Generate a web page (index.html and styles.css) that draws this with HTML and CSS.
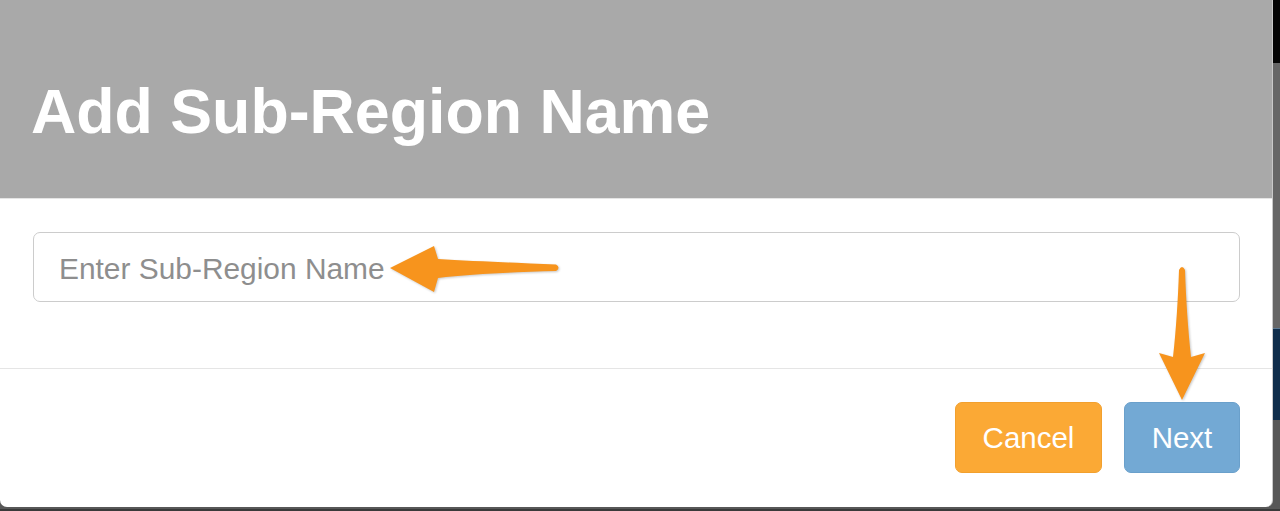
FILE: index.html
```html
<!DOCTYPE html>
<html lang="en">
<head>
<meta charset="utf-8">
<title>Add Sub-Region Name</title>
<link rel="stylesheet" href="styles.css">
</head>
<body>
<div class="screen">
  <div class="modal">
    <div class="modal-header">
      <h1 class="modal-title">Add Sub-Region Name</h1>
    </div>
    <div class="modal-body">
      <input class="form-control" type="text" placeholder="Enter Sub-Region Name">
    </div>
    <div class="modal-footer">
      <button class="btn btn-cancel" type="button">Cancel</button>
      <button class="btn btn-next" type="button">Next</button>
    </div>
  </div>
  <div class="backdrop">
    <div class="bd-top"></div>
    <div class="bd-mid"></div>
    <div class="bd-navy"></div>
    <div class="bd-low"></div>
  </div>
</div>
<svg class="annotations" width="1280" height="511" viewBox="0 0 1280 511" aria-hidden="true">
  <path class="arrow" d="M390,268 L434,246 L438,259 C470,261 520,263 556,264.5 Q561,267.5 556,271 C520,272 470,274 438,278 L434,292 Z"/>
  <path class="arrow" d="M1179,270 Q1182,264 1185,270 C1186,300 1188,330 1191,357 L1205,353 L1182,400 L1159,353 L1173,357 C1176,330 1178,300 1179,270 Z"/>
</svg>
</body>
</html>
```
FILE: styles.css
```css
* {
  box-sizing: border-box;
}

html, body {
  margin: 0;
  padding: 0;
  width: 1280px;
  height: 511px;
  overflow: hidden;
}

body {
  position: relative;
  font-family: "Liberation Sans", Arial, Helvetica, sans-serif;
  background: #4a4a4a;
}

.screen {
  display: flex;
  align-items: flex-start;
  height: 511px;
  background: linear-gradient(#585858, #585858) top / 100% 509px no-repeat, #3a3a3a;
}

.modal {
  width: 1273px;
  height: 507px;
  background: #ffffff;
  border-right: 1px solid #c9c9c9;
  border-radius: 0 0 7px 7px;
  display: flex;
  flex-direction: column;
  overflow: hidden;
  flex-shrink: 0;
}

.modal-header {
  height: 199px;
  background: #a9a9a9;
  border-bottom: 1px solid #e5e5e5;
  padding: 80px 0 0 31px;
}

.modal-title {
  margin: 0;
  font-size: 62.7px;
  line-height: 63px;
  font-weight: 700;
  color: #ffffff;
}

.modal-body {
  padding: 33px 32px 66px 33px;
}

.form-control {
  display: block;
  width: 100%;
  height: 70px;
  padding: 4px 24px 0 25px;
  border: 1px solid #cccccc;
  border-radius: 7px;
  font-family: "Liberation Sans", Arial, Helvetica, sans-serif;
  font-size: 29.9px;
  color: #555555;
  background: #ffffff;
  outline: none;
}

.form-control::placeholder {
  color: #8e8e8e;
}

.modal-footer {
  border-top: 1px solid #e5e5e5;
  padding: 33px 32px 34px 32px;
  display: flex;
  justify-content: flex-end;
  gap: 22px;
}

.btn {
  height: 71px;
  padding: 0;
  border-radius: 7px;
  font-family: "Liberation Sans", Arial, Helvetica, sans-serif;
  font-size: 29.5px;
  color: #ffffff;
  display: flex;
  align-items: center;
  justify-content: center;
}

.btn-cancel {
  width: 147px;
  background: #fba935;
  border: 1px solid #f2a02e;
}

.btn-next {
  width: 116px;
  background: #73a9d4;
  border: 1px solid #6aa0cb;
}

.backdrop {
  flex: 1;
  height: 507px;
  display: flex;
  flex-direction: column;
}

.bd-top {
  height: 63px;
  background: #050505;
}

.bd-mid {
  height: 265px;
  background: #666666;
}

.bd-navy {
  height: 92px;
  background: #0f2d4b;
  border-top: 1px solid #5d7a94;
}

.bd-low {
  flex: 1;
  background: #575757;
}

.annotations {
  position: absolute;
  left: 0;
  top: 0;
  pointer-events: none;
}

.arrow {
  fill: #f7941d;
  filter: drop-shadow(1px 1px 1px rgba(0, 0, 0, 0.22));
}
```
